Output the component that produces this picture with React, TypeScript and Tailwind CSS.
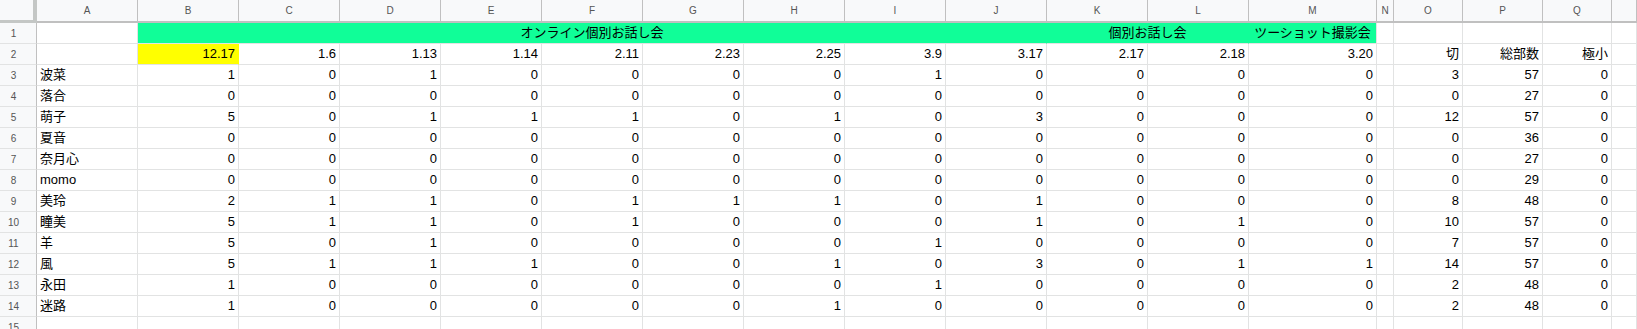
import React from "react";

const cols = ["A", "B", "C", "D", "E", "F", "G", "H", "I", "J", "K", "L", "M", "N", "O", "P", "Q", ""];

const dates = ["12.17", "1.6", "1.13", "1.14", "2.11", "2.23", "2.25", "3.9", "3.17", "2.17", "2.18", "3.20"];

const rows: [string, number[], number[]][] = [
  ["波菜", [1, 0, 1, 0, 0, 0, 0, 1, 0, 0, 0, 0], [3, 57, 0]],
  ["落合", [0, 0, 0, 0, 0, 0, 0, 0, 0, 0, 0, 0], [0, 27, 0]],
  ["萌子", [5, 0, 1, 1, 1, 0, 1, 0, 3, 0, 0, 0], [12, 57, 0]],
  ["夏音", [0, 0, 0, 0, 0, 0, 0, 0, 0, 0, 0, 0], [0, 36, 0]],
  ["奈月心", [0, 0, 0, 0, 0, 0, 0, 0, 0, 0, 0, 0], [0, 27, 0]],
  ["momo", [0, 0, 0, 0, 0, 0, 0, 0, 0, 0, 0, 0], [0, 29, 0]],
  ["美玲", [2, 1, 1, 0, 1, 1, 1, 0, 1, 0, 0, 0], [8, 48, 0]],
  ["瞳美", [5, 1, 1, 0, 1, 0, 0, 0, 1, 0, 1, 0], [10, 57, 0]],
  ["羊", [5, 0, 1, 0, 0, 0, 0, 1, 0, 0, 0, 0], [7, 57, 0]],
  ["風", [5, 1, 1, 1, 0, 0, 1, 0, 3, 0, 1, 1], [14, 57, 0]],
  ["永田", [1, 0, 0, 0, 0, 0, 0, 1, 0, 0, 0, 0], [2, 48, 0]],
  ["迷路", [1, 0, 0, 0, 0, 0, 1, 0, 0, 0, 0, 0], [2, 48, 0]],
];

const cell = "h-[21px] border-r border-b border-[#e2e3e3] flex items-center px-[3px] overflow-hidden whitespace-nowrap";
const num = cell + " justify-end";
const rowHead = "h-[21px] border-r border-b border-[#c0c0c0] border-b-[#e2e3e3] bg-[#f8f9fa] flex items-center justify-center pr-[9px] text-[10px] text-[#555]";

function RowNo({ n }: { n: number }) {
  return <div className={rowHead}>{n}</div>;
}

export default function App() {
  return (
    <div
      className="w-[1637px] h-[329px] overflow-hidden bg-white text-[13px] text-black"
      style={{ fontFamily: '"Liberation Sans", Arial, "Noto Sans CJK JP", sans-serif' }}
    >
      <div className="grid grid-cols-[37px_repeat(12,101px)_128px_17px_69px_80px_69px_1fr]">
        {/* column headers */}
        <div className="h-[23px] bg-[#f8f9fa] border-r-4 border-b-[3px] border-[#c4c7c5]" />
        {cols.map((c, i) => (
          <div
            key={i}
            className="h-[23px] bg-[#f8f9fa] border-r border-[#c0c0c0] border-b-2 flex items-center justify-center text-[10px] text-[#555]"
          >
            {c}
          </div>
        ))}

        {/* row 1 */}
        <RowNo n={1} />
        <div className={cell} />
        <div className="col-span-9 h-[21px] bg-[#10fe98] border-b border-[#e2e3e3] border-r-[#10fe98] border-r flex items-center justify-center">
          オンライン個別お話し会
        </div>
        <div className="col-span-2 h-[21px] bg-[#10fe98] border-b border-[#e2e3e3] border-r-[#10fe98] border-r flex items-center justify-center">
          個別お話し会
        </div>
        <div className="h-[21px] bg-[#10fe98] border-b border-r border-[#e2e3e3] flex items-center justify-center whitespace-nowrap overflow-hidden">
          ツーショット撮影会
        </div>
        {[0, 1, 2, 3, 4].map((i) => (
          <div key={i} className={cell} />
        ))}

        {/* row 2 */}
        <RowNo n={2} />
        <div className={cell} />
        {dates.map((d, i) => (
          <div key={d + i} className={num + (i === 0 ? " bg-[#ffff00] border-r-[#ffff00]" : "")}>
            {d}
          </div>
        ))}
        <div className={cell} />
        <div className={num}>切</div>
        <div className={num}>総部数</div>
        <div className={num}>極小</div>
        <div className={cell} />

        {/* data rows */}
        {rows.map(([name, vals, tail], r) => (
          <React.Fragment key={name}>
            <RowNo n={r + 3} />
            <div className={cell}>{name}</div>
            {vals.map((v, i) => (
              <div key={i} className={num}>
                {v}
              </div>
            ))}
            <div className={cell} />
            {tail.map((v, i) => (
              <div key={"t" + i} className={num}>
                {v}
              </div>
            ))}
            <div className={cell} />
          </React.Fragment>
        ))}

        {/* row 15 */}
        <RowNo n={15} />
        {cols.map((_, i) => (
          <div key={"e" + i} className={cell} />
        ))}
      </div>
    </div>
  );
}
